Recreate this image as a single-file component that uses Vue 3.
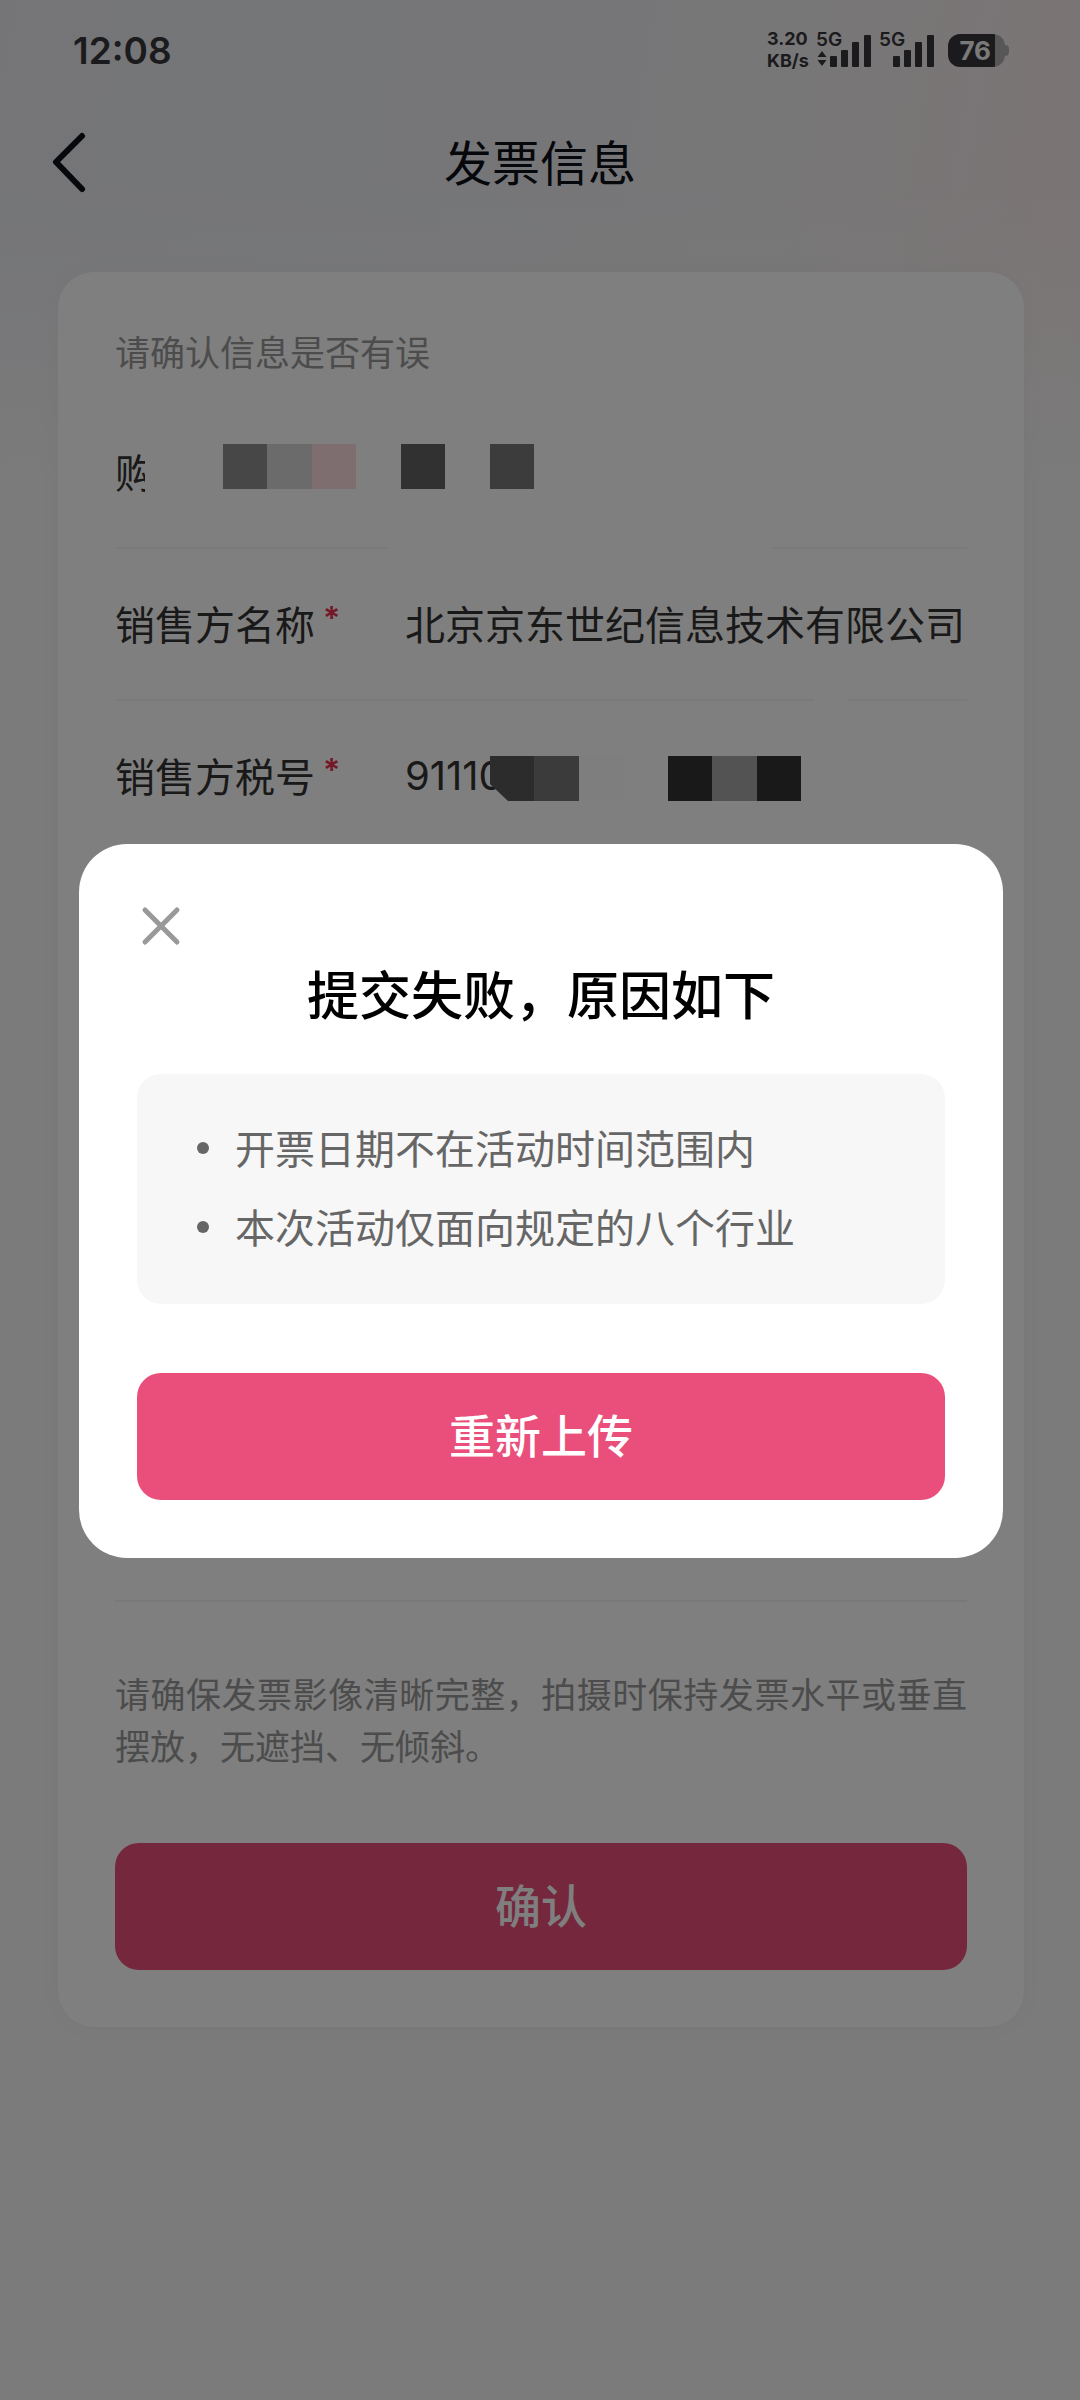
<script setup>
import { ref } from 'vue'

const sellerName = ref('北京京东世纪信息技术有限公司')
const sellerTaxNo = ref('91110')
const reasons = ['开票日期不在活动时间范围内', '本次活动仅面向规定的八个行业']
const buyerMask = ['#8e8e8e', '#d6d6d6', '#fcdde1', 'transparent', '#626262', 'transparent', '#787878']
const taxMask = ['#585858', '#767676', '#fdfdfd', 'transparent', '#333333', '#a6a6a6', '#333333']
</script>

<template>
  <div class="page">
    <div class="status">
      <span class="time">12:08</span>
      <div class="indicators">
        <div class="speed"><span>3.20</span><span>KB/s</span></div>
        <div class="signal">
          <span class="net">5G</span>
          <svg width="56" height="36" viewBox="0 0 56 36" aria-hidden="true">
            <path d="M7 19l4.500 6h-9zM7 34l4.500-6h-9z" />
            <rect x="15" y="24" width="7" height="11" rx="1" />
            <rect x="26" y="18" width="7" height="17" rx="1" />
            <rect x="37" y="10" width="7" height="25" rx="1" />
            <rect x="49" y="3" width="7" height="32" rx="1" />
          </svg>
        </div>
        <div class="signal">
          <span class="net">5G</span>
          <svg width="56" height="36" viewBox="0 0 56 36" aria-hidden="true">
            <rect x="15" y="24" width="7" height="11" rx="1" />
            <rect x="26" y="18" width="7" height="17" rx="1" />
            <rect x="37" y="10" width="7" height="25" rx="1" />
            <rect x="49" y="3" width="7" height="32" rx="1" />
          </svg>
        </div>
        <div class="battery">
          <span>76</span>
        </div>
      </div>
    </div>

    <header class="nav">
      <button class="back" type="button" aria-label="返回">
        <svg width="40" height="64" viewBox="0 0 40 64" fill="none" aria-hidden="true">
          <path d="M34 6L8 32L34 59" stroke="#0e1018" stroke-width="6" stroke-linecap="round" stroke-linejoin="round" />
        </svg>
      </button>
      <h1>发票信息</h1>
    </header>

    <main class="card">
      <p class="hint">请确认信息是否有误</p>

      <div class="row">
        <span class="label clipped">购</span>
        <div class="mask buyer">
          <i v-for="(c, i) in buyerMask" :key="i" :style="{ background: c }"></i>
        </div>
        <div class="rule"><i class="long-a"></i><i class="short-a"></i></div>
      </div>

      <div class="row">
        <label class="label" for="seller">销售方名称<b>*</b></label>
        <input id="seller" v-model="sellerName" class="name" type="text" />
        <div class="rule"><i class="long-b"></i><i class="short-b"></i></div>
      </div>

      <div class="row">
        <label class="label" for="tax">销售方税号<b>*</b></label>
        <input id="tax" v-model="sellerTaxNo" class="tax" type="text" />
        <div class="mask taxno">
          <i v-for="(c, i) in taxMask" :key="i" :style="{ background: c }"></i>
        </div>
      </div>

      <div class="rest"></div>

      <p class="note">请确保发票影像清晰完整，拍摄时保持发票水平或垂直摆放，无遮挡、无倾斜。</p>
      <button class="primary" type="button">确认</button>
    </main>

    <div class="backdrop">
      <section class="dialog" role="dialog" aria-modal="true" aria-labelledby="dialog-title">
        <button class="close" type="button" aria-label="关闭">
          <svg width="48" height="48" viewBox="0 0 48 48" fill="none" aria-hidden="true">
            <path d="M8 8L40 40M40 8L8 40" stroke="#999" stroke-width="5" stroke-linecap="round" />
          </svg>
        </button>
        <h2 id="dialog-title">提交失败，原因如下</h2>
        <ul class="reasons">
          <li v-for="r in reasons" :key="r">{{ r }}</li>
        </ul>
        <button class="primary" type="button">重新上传</button>
      </section>
    </div>
  </div>
</template>

<style>
body {
  margin: 0;
  background: #f6f6f6;
}
</style>

<style scoped>
.page {
  min-height: 100vh;
  box-sizing: border-box;
  padding-bottom: 57px;
  font-family: "Noto Sans CJK SC", sans-serif;
  color: #333;
  background:
    linear-gradient(to bottom, rgba(246, 246, 246, 0) 180px, #f6f6f6 480px),
    linear-gradient(100deg, #eaebf1 0%, #ecedf1 45%, #f0eef0 70%, #f8e8e8 100%) 0 0 / 100% 480px no-repeat,
    #f6f6f6;
}
h1, h2, p, ul {
  margin: 0;
  padding: 0;
}
button {
  border: 0;
  padding: 0;
  background: none;
  font-family: inherit;
}
svg {
  display: block;
}

.status {
  display: flex;
  align-items: center;
  justify-content: space-between;
  height: 100px;
  padding: 0 71px 0 73px;
  font-family: Inter, sans-serif;
  font-weight: 600;
  color: #37373a;
}
.time {
  font-size: 37px;
}
.indicators {
  display: flex;
  align-items: center;
}
.speed {
  display: flex;
  flex-direction: column;
  width: 48px;
  font-size: 18px;
  line-height: 22px;
  font-weight: 700;
}
.signal {
  position: relative;
  margin-right: 7px;
  fill: #37373a;
}
.signal + .battery {
  margin-left: 7px;
}
.net {
  position: absolute;
  top: -3px;
  left: 1px;
  font-size: 19px;
  line-height: 22px;
}
.battery {
  position: relative;
  display: flex;
  align-items: center;
  justify-content: flex-end;
  box-sizing: border-box;
  width: 57px;
  height: 33px;
  margin-right: 4px;
  padding-right: 14px;
  border-radius: 12px;
  background: linear-gradient(to right, #37373a 47px, #b0aeae 47px);
  color: #f6f4f4;
  font-size: 26px;
  font-weight: 700;
}
.battery::after {
  content: "";
  position: absolute;
  right: -4px;
  top: 11px;
  width: 5px;
  height: 11px;
  border-radius: 0 4px 4px 0;
  background: #b0aeae;
}

.nav {
  display: grid;
  grid-template-columns: 48px 1fr 48px;
  align-items: center;
  height: 124px;
  padding: 0 48px;
}
h1 {
  padding-bottom: 4px;
  text-align: center;
  font-size: 48px;
  line-height: 64px;
  font-weight: 400;
  color: #0e1018;
}

.card {
  margin: 48px 56px 0 58px;
  padding: 53px 57px 57px;
  border-radius: 36px;
  background: #fff;
  box-shadow: 0 0 24px rgba(0, 0, 0, 0.03);
}
.hint, .note {
  font-size: 35px;
  line-height: 52px;
  color: #999;
}
.hint {
  margin-bottom: 20px;
}
.note {
  margin: 65px 0 72px;
  text-align: justify;
}
.row {
  position: relative;
  display: flex;
  align-items: center;
  box-sizing: border-box;
  height: 152px;
  padding-bottom: 4px;
  font-size: 40px;
}
.label {
  display: flex;
  flex: 0 0 290px;
  line-height: 56px;
}
.label b {
  margin-left: 8px;
  font-family: Inter, sans-serif;
  font-size: 32px;
  line-height: 48px;
  font-weight: 600;
  color: #e8304f;
}
.label.clipped {
  flex-basis: 30px;
  overflow: hidden;
}
input {
  min-width: 0;
  height: 60px;
  padding: 0;
  border: 0;
  outline: 0;
  background: none;
  color: #333;
  font: inherit;
}
.name {
  flex: 1;
  margin-right: 4px;
}
.tax {
  width: 93px;
  font-family: Inter, sans-serif;
}
.mask {
  position: absolute;
  display: flex;
  width: 311px;
  height: 45px;
}
.mask i {
  flex: 1;
}
.buyer {
  top: 47px;
  left: 108px;
}
.taxno {
  top: 55px;
  left: 375px;
}
.taxno i:first-child {
  clip-path: polygon(0 0, 100% 0, 100% 100%, 18px 100%, 0 28px);
}
.rule {
  position: absolute;
  left: 0;
  right: 0;
  bottom: 0;
  display: flex;
  justify-content: space-between;
  height: 2px;
}
.rule i {
  background: #f5f5f5;
}
.long-a { width: 32%; }
.short-a { width: 23%; }
.long-b { width: 82%; }
.short-b { width: 14%; }
.rest {
  height: 747px;
  border-bottom: 2px solid #f2f2f2;
}
.primary {
  display: block;
  width: 100%;
  height: 127px;
  padding-bottom: 8px;
  border-radius: 24px;
  background: #ea4e7a;
  color: #fff;
  font-size: 46px;
  font-weight: 500;
}

.backdrop {
  position: fixed;
  inset: 0;
  display: flex;
  align-items: center;
  justify-content: center;
  padding: 2px 77px 0 79px;
  background: rgba(0, 0, 0, 0.5);
}
.dialog {
  flex: 1;
  padding: 58px;
  border-radius: 48px;
  background: #fff;
}
.close {
  display: block;
}
h2 {
  margin-top: 11px;
  text-align: center;
  font-size: 52px;
  line-height: 64px;
  font-weight: 500;
  color: #000;
}
.reasons {
  margin: 49px 0 69px;
  padding: 34px 36px 38px 98px;
  border-radius: 24px;
  background: #f7f7f7;
  color: #666;
  font-size: 40px;
  line-height: 79px;
  list-style: none;
}
.reasons li {
  display: flex;
  align-items: center;
  margin-left: -38px;
}
.reasons li::before {
  content: "";
  width: 12px;
  height: 12px;
  margin-right: 26px;
  border-radius: 50%;
  background: #666;
}
</style>
